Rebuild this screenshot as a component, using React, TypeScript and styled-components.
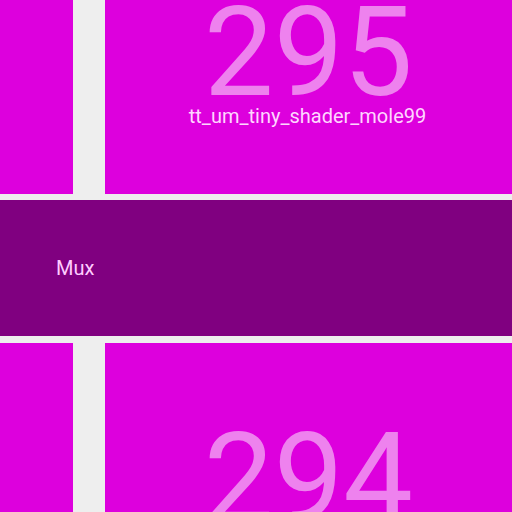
import React from "react";
import styled, { createGlobalStyle } from "styled-components";

const Global = createGlobalStyle`
  html, body { margin: 0; padding: 0; background: #eeeeee; overflow: hidden; }
  body { font-family: Roboto, "Liberation Sans", sans-serif; }
`;

const Page = styled.div`
  width: 512px;
  height: 512px;
  overflow: hidden;
  display: flex;
  flex-direction: column;
`;

const List = styled.div`
  margin-top: -83px;
  display: flex;
  flex-direction: column;
`;

const Row = styled.div`
  display: flex;
  gap: 32px;
  height: 277px;
  flex-shrink: 0;
`;

const Side = styled.div`
  width: 73px;
  background: #dd00dd;
`;

const Card = styled.div`
  flex: 1;
  background: #dd00dd;
  display: flex;
  flex-direction: column;
  align-items: center;
  padding-top: 90px;
  box-sizing: border-box;
`;

const Count = styled.div`
  font-size: 124px;
  line-height: 92px;
  color: #ee82ee;
`;

const Name = styled.div`
  margin-top: 5px;
  margin-right: 2px;
  font-size: 20px;
  line-height: 24px;
  color: #ffd6ff;
`;

const Band = styled.div<{ $before: number; $after: number }>`
  margin: ${(p) => p.$before}px 0 ${(p) => p.$after}px;
  height: 136px;
  flex-shrink: 0;
  background: #800080;
  display: flex;
  align-items: center;
  padding-left: 56px;
  font-size: 20px;
  color: #ffccff;
`;

const Item = ({ n, name }: { n: number; name: string }) => (
  <Row>
    <Side />
    <Card>
      <Count>{n}</Count>
      {name && <Name>{name}</Name>}
    </Card>
  </Row>
);

export default function App() {
  return (
    <Page>
      <Global />
      <List>
        <Item n={295} name="tt_um_tiny_shader_mole99" />
        <Band $before={6} $after={7}>Mux</Band>
        <Item n={294} name="" />
      </List>
    </Page>
  );
}
